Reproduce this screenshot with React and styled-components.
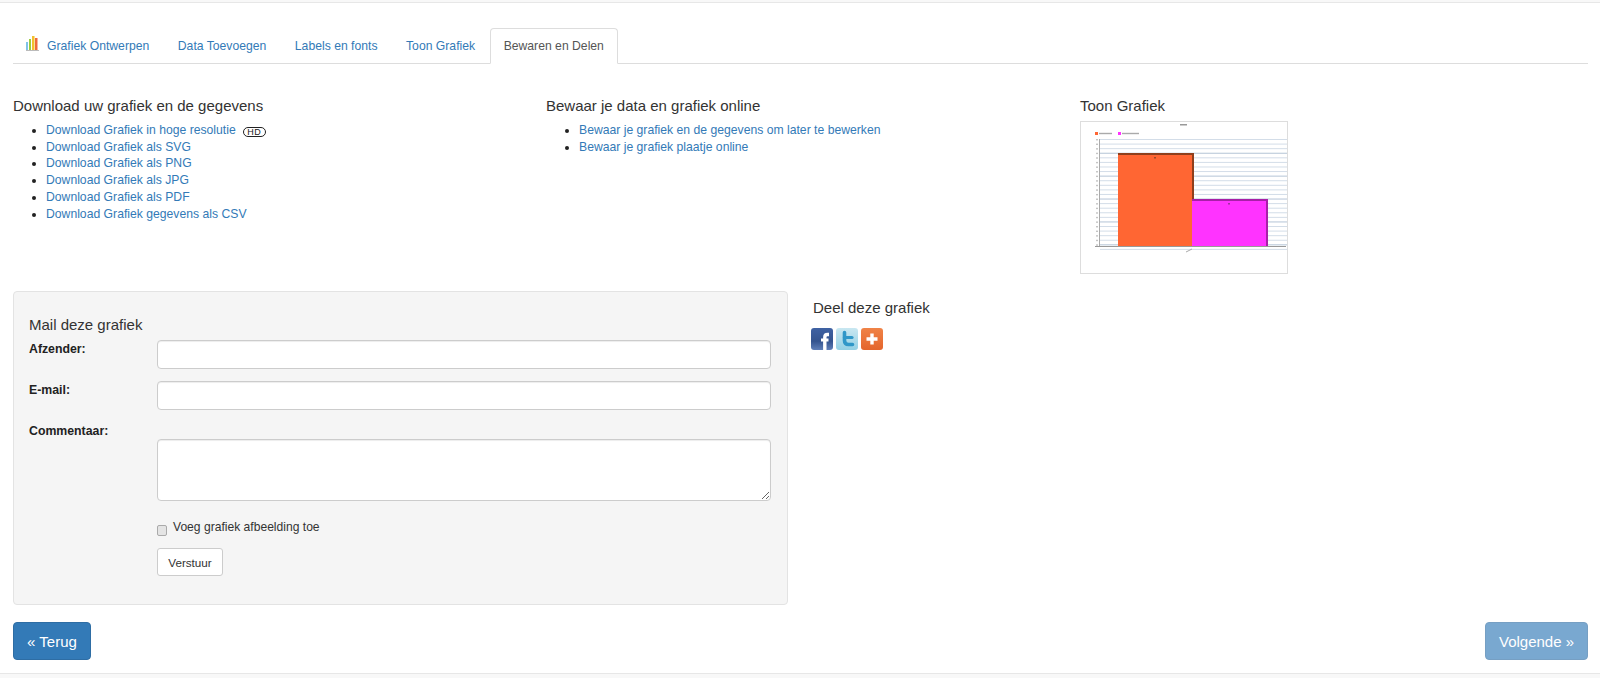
import React from 'react'
import styled, { createGlobalStyle } from 'styled-components'

const Global = createGlobalStyle`
  html, body { margin: 0; padding: 0; background: #fff; }
  body {
    font-family: "Liberation Sans", Arial, sans-serif;
    font-size: 13px;
    color: #333;
  }
`;

const Page = styled.div`
  width: 1600px;
  height: 678px;
  box-sizing: border-box;
  display: flex;
  flex-direction: column;
  overflow: hidden;
  background: #fff;
`;

const TopStrip = styled.div`
  height: 2px;
  background: #f8f8f8;
  border-bottom: 1px solid #e7e7e7;
`;

const Main = styled.div`
  flex: 1;
  padding: 25px 12px 0 13px;
  display: flex;
  flex-direction: column;
`;

const Tabs = styled.ul`
  list-style: none;
  margin: 0;
  padding: 0;
  height: 35px;
  display: flex;
  border-bottom: 1px solid #ddd;
`;

const Tab = styled.li`
  height: 36px;
  box-sizing: border-box;
  padding: 0 13px;
  margin-right: 0.5px;
  display: flex;
  align-items: center;
  gap: 8px;
  font-size: 12.2px;
  color: ${({ $active }) => ($active ? '#555' : '#337ab7')};
  background: ${({ $active }) => ($active ? '#fff' : 'transparent')};
  border: 1px solid ${({ $active }) => ($active ? '#ddd' : 'transparent')};
  border-bottom-color: ${({ $active }) => ($active ? '#fff' : 'transparent')};
  border-radius: 4px 4px 0 0;
`;

const TabIcon = styled.svg`
  width: 13px;
  height: 15px;
  margin: -5px 0 0 -1px;
`;

const TopColumns = styled.div`
  display: grid;
  grid-template-columns: 533px 534px 1fr;
  margin-top: 34px;
  height: 177px;
`;

const Heading = styled.h4`
  margin: 0;
  font-size: 15px;
  font-weight: 400;
  line-height: 16px;
  color: #333;
`;

const LinkList = styled.ul`
  margin: 8px 0 0;
  padding: 0 0 0 33px;
  line-height: 16.7px;
  font-size: 12.2px;
`;

const LinkItem = styled.li`
  color: #222;
`;

const Link = styled.a`
  color: #337ab7;
`;

const HdBadge = styled.span`
  display: inline-flex;
  align-items: center;
  justify-content: center;
  box-sizing: border-box;
  width: 23px;
  height: 10px;
  margin-left: 7px;
  font-size: 9px;
  line-height: 8px;
  letter-spacing: 0.5px;
  color: #222;
  border: 1.5px solid #222;
  border-radius: 5px;
  vertical-align: -1px;
`;

const Thumb = styled.svg`
  display: block;
  width: 208px;
  height: 153px;
  margin-top: 7px;
`;

const BottomColumns = styled.div`
  display: flex;
  margin-top: 16px;
`;

const Well = styled.form`
  width: 775px;
  height: 314px;
  box-sizing: border-box;
  padding: 25px 15px 0;
  background: #f5f5f5;
  border: 1px solid #e3e3e3;
  border-radius: 4px;
`;

const WellTitle = styled.div`
  font-size: 15px;
  line-height: 16px;
  color: #333;
  margin-bottom: 7px;
`;

const FormRow = styled.div`
  display: grid;
  grid-template-columns: 128px 614px;
  margin-bottom: ${({ $gap }) => $gap}px;
`;

const FieldLabel = styled.label`
  padding-top: 1.5px;
  font-size: 12.3px;
  font-weight: 700;
  line-height: 15px;
  color: #222;
`;

const Input = styled.input`
  display: block;
  width: 100%;
  height: 29px;
  box-sizing: border-box;
  background: #fff;
  border: 1px solid #ccc;
  border-radius: 4px;
  box-shadow: inset 0 1px 1px rgba(0, 0, 0, 0.075);
`;

const Area = styled.textarea`
  display: block;
  width: 100%;
  height: 62px;
  box-sizing: border-box;
  margin-top: 17px;
  background: #fff;
  border: 1px solid #ccc;
  border-radius: 4px;
  box-shadow: inset 0 1px 1px rgba(0, 0, 0, 0.075);
`;

const CheckRow = styled.div`
  margin: 0 0 12px 128px;
  display: flex;
  align-items: flex-start;
  gap: 6px;
  font-size: 12.1px;
  line-height: 15px;
  color: #333;
`;

const Check = styled.input`
  appearance: none;
  box-sizing: border-box;
  width: 10px;
  height: 11px;
  margin: 5px 0 0;
  background: #e4e4e4;
  border: 1px solid #aaa;
  border-radius: 2px;
`;

const SendButton = styled.button`
  display: block;
  margin-left: 128px;
  width: 66px;
  height: 28px;
  padding: 0;
  font-family: inherit;
  font-size: 11.7px;
  color: #333;
  background: #fff;
  border: 1px solid #ccc;
  border-radius: 3px;
`;

const ShareColumn = styled.div`
  padding: 9px 0 0 23px;
`;

const ShareTitle = styled(Heading)`
  padding-left: 2px;
`;

const ShareIcons = styled.div`
  display: flex;
  gap: 3px;
  margin-top: 12px;
`;

const ShareIcon = styled.svg`
  display: block;
  width: 22px;
  height: 22px;
`;

const Pager = styled.div`
  display: flex;
  justify-content: space-between;
  margin-top: 17px;
`;

const PagerButton = styled.button`
  height: 38px;
  padding: 0;
  width: ${({ $width }) => $width}px;
  font-family: inherit;
  font-size: 15px;
  color: #fff;
  background: #337ab7;
  border: 1px solid #2e6da4;
  border-radius: 4px;
  opacity: ${({ $dim }) => ($dim ? 0.65 : 1)};
`;

const BottomStrip = styled.div`
  height: 4px;
  background: #f8f8f8;
  border-top: 1px solid #e7e7e7;
`;

function BarsIcon() {
  return (
    <TabIcon viewBox="0 0 13 15">
      <rect x="0" y="6" width="2" height="8" fill="#7fc4e8" />
      <rect x="3" y="3" width="2" height="11" fill="#9ccc3c" />
      <rect x="6" y="0" width="2.5" height="14" fill="#f2c12e" />
      <rect x="9" y="2" width="2.5" height="12" fill="#ee6a3a" />
      <rect x="0" y="14" width="13" height="1" fill="#bbb" />
    </TabIcon>
  )
}

function FacebookIcon() {
  return (
    <ShareIcon viewBox="0 0 22 22">
      <defs>
        <linearGradient id="fb" x1="0" y1="0" x2="0" y2="1">
          <stop offset="0" stopColor="#3f62a3" />
          <stop offset="0.6" stopColor="#34548f" />
          <stop offset="1" stopColor="#5f7fb8" />
        </linearGradient>
      </defs>
      <rect width="22" height="22" rx="3" fill="url(#fb)" />
      <path d="M18 6.5H16.5Q13.8 6.5 13.8 9.2V22" fill="none" stroke="#fff" strokeWidth="3.4" />
      <path d="M10 12H17.5" fill="none" stroke="#fff" strokeWidth="3" />
    </ShareIcon>
  )
}

function TwitterIcon() {
  return (
    <ShareIcon viewBox="0 0 22 22">
      <defs>
        <linearGradient id="tw" x1="0" y1="0" x2="0" y2="1">
          <stop offset="0" stopColor="#c9e7f1" />
          <stop offset="1" stopColor="#93d0e4" />
        </linearGradient>
      </defs>
      <rect width="22" height="22" rx="3" fill="url(#tw)" />
      <path d="M8.5 4.5V12.5Q8.5 16.5 12.5 16.5H16.5" fill="none" stroke="#2f97c8" strokeWidth="3.6" strokeLinecap="round" />
      <path d="M8.5 9.5H16" fill="none" stroke="#2f97c8" strokeWidth="3.2" strokeLinecap="round" />
    </ShareIcon>
  )
}

function PlusIcon() {
  return (
    <ShareIcon viewBox="0 0 22 22">
      <defs>
        <linearGradient id="pl" x1="0" y1="0" x2="0" y2="1">
          <stop offset="0" stopColor="#f08347" />
          <stop offset="1" stopColor="#e4652c" />
        </linearGradient>
      </defs>
      <rect width="22" height="22" rx="3" fill="url(#pl)" />
      <path d="M11 5.5V16.5M5.5 11H16.5" fill="none" stroke="#fff" strokeWidth="3.4" />
    </ShareIcon>
  )
}

function ChartThumb() {
  return (
    <Thumb viewBox="0 0 208 153">
      <rect x="0.5" y="0.5" width="207" height="152" fill="#fff" stroke="#ddd" />
      <g transform="translate(0 1)">
        <rect x="100" y="2" width="7" height="1.5" fill="#999" />
        <rect x="15" y="10" width="3" height="3" fill="#ff6633" />
        <rect x="19" y="10.8" width="13" height="1.4" fill="#aaa" />
        <rect x="38" y="10" width="3" height="3" fill="#ff33ff" />
        <rect x="42" y="10.8" width="17" height="1.4" fill="#aaa" />
        {Array.from({ length: 25 }, (_, i) => (
          <line key={i} x1="20" x2="207" y1={17.5 + i * 4.58} y2={17.5 + i * 4.58}
            stroke={i % 5 === 3 ? '#b4c4d6' : '#d3dde8'} strokeWidth="1" />
        ))}
        {Array.from({ length: 24 }, (_, i) => (
          <rect key={i} x="16" y={17 + i * 4.58} width="2" height="1.4" fill="#c4c4c4" />
        ))}
        <line x1="19.5" x2="19.5" y1="17" y2="124" stroke="#aaa" />
        <line x1="15" x2="206" y1="124.5" y2="124.5" stroke="#999" />
        <rect x="38" y="31" width="76" height="93" fill="#8f3f1c" />
        <rect x="38" y="33" width="74" height="91" fill="#ff6633" />
        <rect x="112" y="77" width="76" height="47" fill="#a81fa8" />
        <rect x="112" y="79" width="74" height="45" fill="#ff33ff" />
        <rect x="74" y="35" width="2" height="1.5" fill="#9c4a2a" />
        <rect x="148" y="81" width="2" height="1.5" fill="#a030a0" />
        <line x1="106" y1="130" x2="112" y2="127" stroke="#aaa" />
      </g>
    </Thumb>
  )
}

export default function App() {
  return (
    <Page>
      <Global />
      <TopStrip />
      <Main>
        <Tabs>
          <Tab><BarsIcon />Grafiek Ontwerpen</Tab>
          <Tab>Data Toevoegen</Tab>
          <Tab>Labels en fonts</Tab>
          <Tab>Toon Grafiek</Tab>
          <Tab $active>Bewaren en Delen</Tab>
        </Tabs>

        <TopColumns>
          <div>
            <Heading>Download uw grafiek en de gegevens</Heading>
            <LinkList>
              <LinkItem><Link>Download Grafiek in hoge resolutie</Link><HdBadge>HD</HdBadge></LinkItem>
              <LinkItem><Link>Download Grafiek als SVG</Link></LinkItem>
              <LinkItem><Link>Download Grafiek als PNG</Link></LinkItem>
              <LinkItem><Link>Download Grafiek als JPG</Link></LinkItem>
              <LinkItem><Link>Download Grafiek als PDF</Link></LinkItem>
              <LinkItem><Link>Download Grafiek gegevens als CSV</Link></LinkItem>
            </LinkList>
          </div>
          <div>
            <Heading>Bewaar je data en grafiek online</Heading>
            <LinkList>
              <LinkItem><Link>Bewaar je grafiek en de gegevens om later te bewerken</Link></LinkItem>
              <LinkItem><Link>Bewaar je grafiek plaatje online</Link></LinkItem>
            </LinkList>
          </div>
          <div>
            <Heading>Toon Grafiek</Heading>
            <ChartThumb />
          </div>
        </TopColumns>

        <BottomColumns>
          <Well>
            <WellTitle>Mail deze grafiek</WellTitle>
            <FormRow $gap={12}>
              <FieldLabel>Afzender:</FieldLabel>
              <Input type="text" />
            </FormRow>
            <FormRow $gap={12}>
              <FieldLabel>E-mail:</FieldLabel>
              <Input type="text" />
            </FormRow>
            <FormRow $gap={19}>
              <FieldLabel>Commentaar:</FieldLabel>
              <Area />
            </FormRow>
            <CheckRow>
              <Check type="checkbox" />
              Voeg grafiek afbeelding toe
            </CheckRow>
            <SendButton type="button">Verstuur</SendButton>
          </Well>
          <ShareColumn>
            <ShareTitle>Deel deze grafiek</ShareTitle>
            <ShareIcons>
              <FacebookIcon />
              <TwitterIcon />
              <PlusIcon />
            </ShareIcons>
          </ShareColumn>
        </BottomColumns>

        <Pager>
          <PagerButton type="button" $width={78}>« Terug</PagerButton>
          <PagerButton type="button" $width={103} $dim>Volgende »</PagerButton>
        </Pager>
      </Main>
      <BottomStrip />
    </Page>
  )
}
